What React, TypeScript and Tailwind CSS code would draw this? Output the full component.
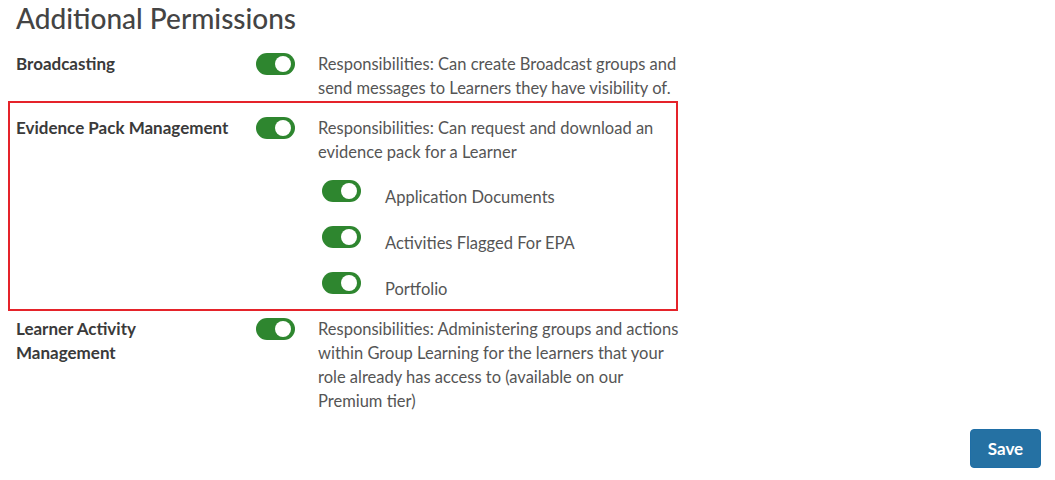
import React from 'react';

function Toggle({ on = true }: { on?: boolean }) {
  return (
    <span
      className={`relative inline-flex h-[22px] w-[39px] shrink-0 items-center rounded-full ${on ? 'bg-[#2e862f]' : 'bg-gray-300'}`}
    >
      <span className={`absolute top-[3px] h-4 w-4 rounded-full bg-white ${on ? 'left-[19px]' : 'left-[3px]'}`} />
    </span>
  );
}

function PermissionRow({
  label,
  desc,
  children,
}: {
  label: React.ReactNode;
  desc: string;
  children?: React.ReactNode;
}) {
  return (
    <div className="flex">
      <div className="w-[240px] shrink-0 pr-4 text-[17px] font-bold text-[#3a3a3a]">{label}</div>
      <div className="w-[62px] shrink-0 pt-px">
        <Toggle />
      </div>
      <div className="w-[364px] shrink-0 text-[#555]">
        <p>{desc}</p>
        {children}
      </div>
    </div>
  );
}

const subItems = ['Application Documents', 'Activities Flagged For EPA', 'Portfolio'];

export default function App() {
  return (
    <div className="min-h-[480px] w-[1055px] bg-white font-['Lato',sans-serif] text-[16.5px] leading-6">
      <div className="px-4">
        <h2 className="pt-px text-[28px] font-medium leading-[34px] text-[#444]">Additional Permissions</h2>

        <div className="mt-[17px]">
          <PermissionRow
            label="Broadcasting"
            desc="Responsibilities: Can create Broadcast groups and send messages to Learners they have visibility of."
          />
        </div>

        <div className="-mx-2 mt-px w-[670px] border-2 border-[#e5232a] pb-2 pl-1.5 pt-[13px]">
          <PermissionRow
            label="Evidence Pack Management"
            desc="Responsibilities: Can request and download an evidence pack for a Learner"
          >
            <div className="mt-4 flex flex-col gap-[17px] pl-1">
              {subItems.map(item => (
                <div key={item} className="flex items-start">
                  <Toggle />
                  <span className="ml-6 mt-[5px]">{item}</span>
                </div>
              ))}
            </div>
          </PermissionRow>
        </div>

        <div className="mt-1.5">
          <PermissionRow
            label={
              <>
                Learner Activity
                <br />
                Management
              </>
            }
            desc="Responsibilities: Administering groups and actions within Group Learning for the learners that your role already has access to (available on our Premium tier)"
          />
        </div>
      </div>

      <div className="mt-4 flex justify-end pr-[14px]">
        <button className="h-[39px] w-[71px] rounded border border-[#1f6ea6] bg-[#2571a3] text-[17px] font-bold text-white">
          Save
        </button>
      </div>
    </div>
  );
}
